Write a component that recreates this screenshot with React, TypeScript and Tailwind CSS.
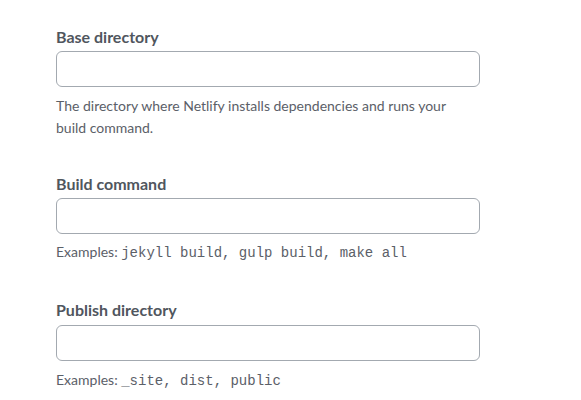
export default function App() {
  const sans = { fontFamily: 'Lato, "Noto Sans", sans-serif' };
  const mono = { fontFamily: '"Liberation Mono", monospace' };
  return (
    <div className="w-[581px] h-[400px] bg-white overflow-hidden" style={sans}>
      <div className="pl-[56px] pt-[25px] w-[480px]">
        <div className="flex flex-col">
          <label className="text-[16px] leading-[24px] font-bold text-[#50565e]">Base directory</label>
          <input className="mt-[2px] h-[36px] w-[424px] rounded-[6px] border border-[#a3a9b0] bg-white" />
          <p className="mt-[8px] text-[14px] leading-[22px] text-[#5b6068] w-[410px]">
            The directory where Netlify installs dependencies and runs your build command.
          </p>
        </div>
        <div className="flex flex-col mt-[33px]">
          <label className="text-[16px] leading-[24px] font-bold text-[#50565e]">Build command</label>
          <input className="mt-[2px] h-[36px] w-[424px] rounded-[6px] border border-[#a3a9b0] bg-white" />
          <p className="mt-[7px] text-[14px] leading-[22px] text-[#5b6068]">
            Examples: <code className="text-[14px]" style={mono}>jekyll build, gulp build, make all</code>
          </p>
        </div>
        <div className="flex flex-col mt-[34px]">
          <label className="text-[16px] leading-[24px] font-bold text-[#50565e]">Publish directory</label>
          <input className="mt-[3px] h-[36px] w-[424px] rounded-[6px] border border-[#a3a9b0] bg-white" />
          <p className="mt-[8px] text-[14px] leading-[22px] text-[#5b6068]">
            Examples: <code className="text-[14px]" style={mono}>_site, dist, public</code>
          </p>
        </div>
      </div>
    </div>
  );
}
